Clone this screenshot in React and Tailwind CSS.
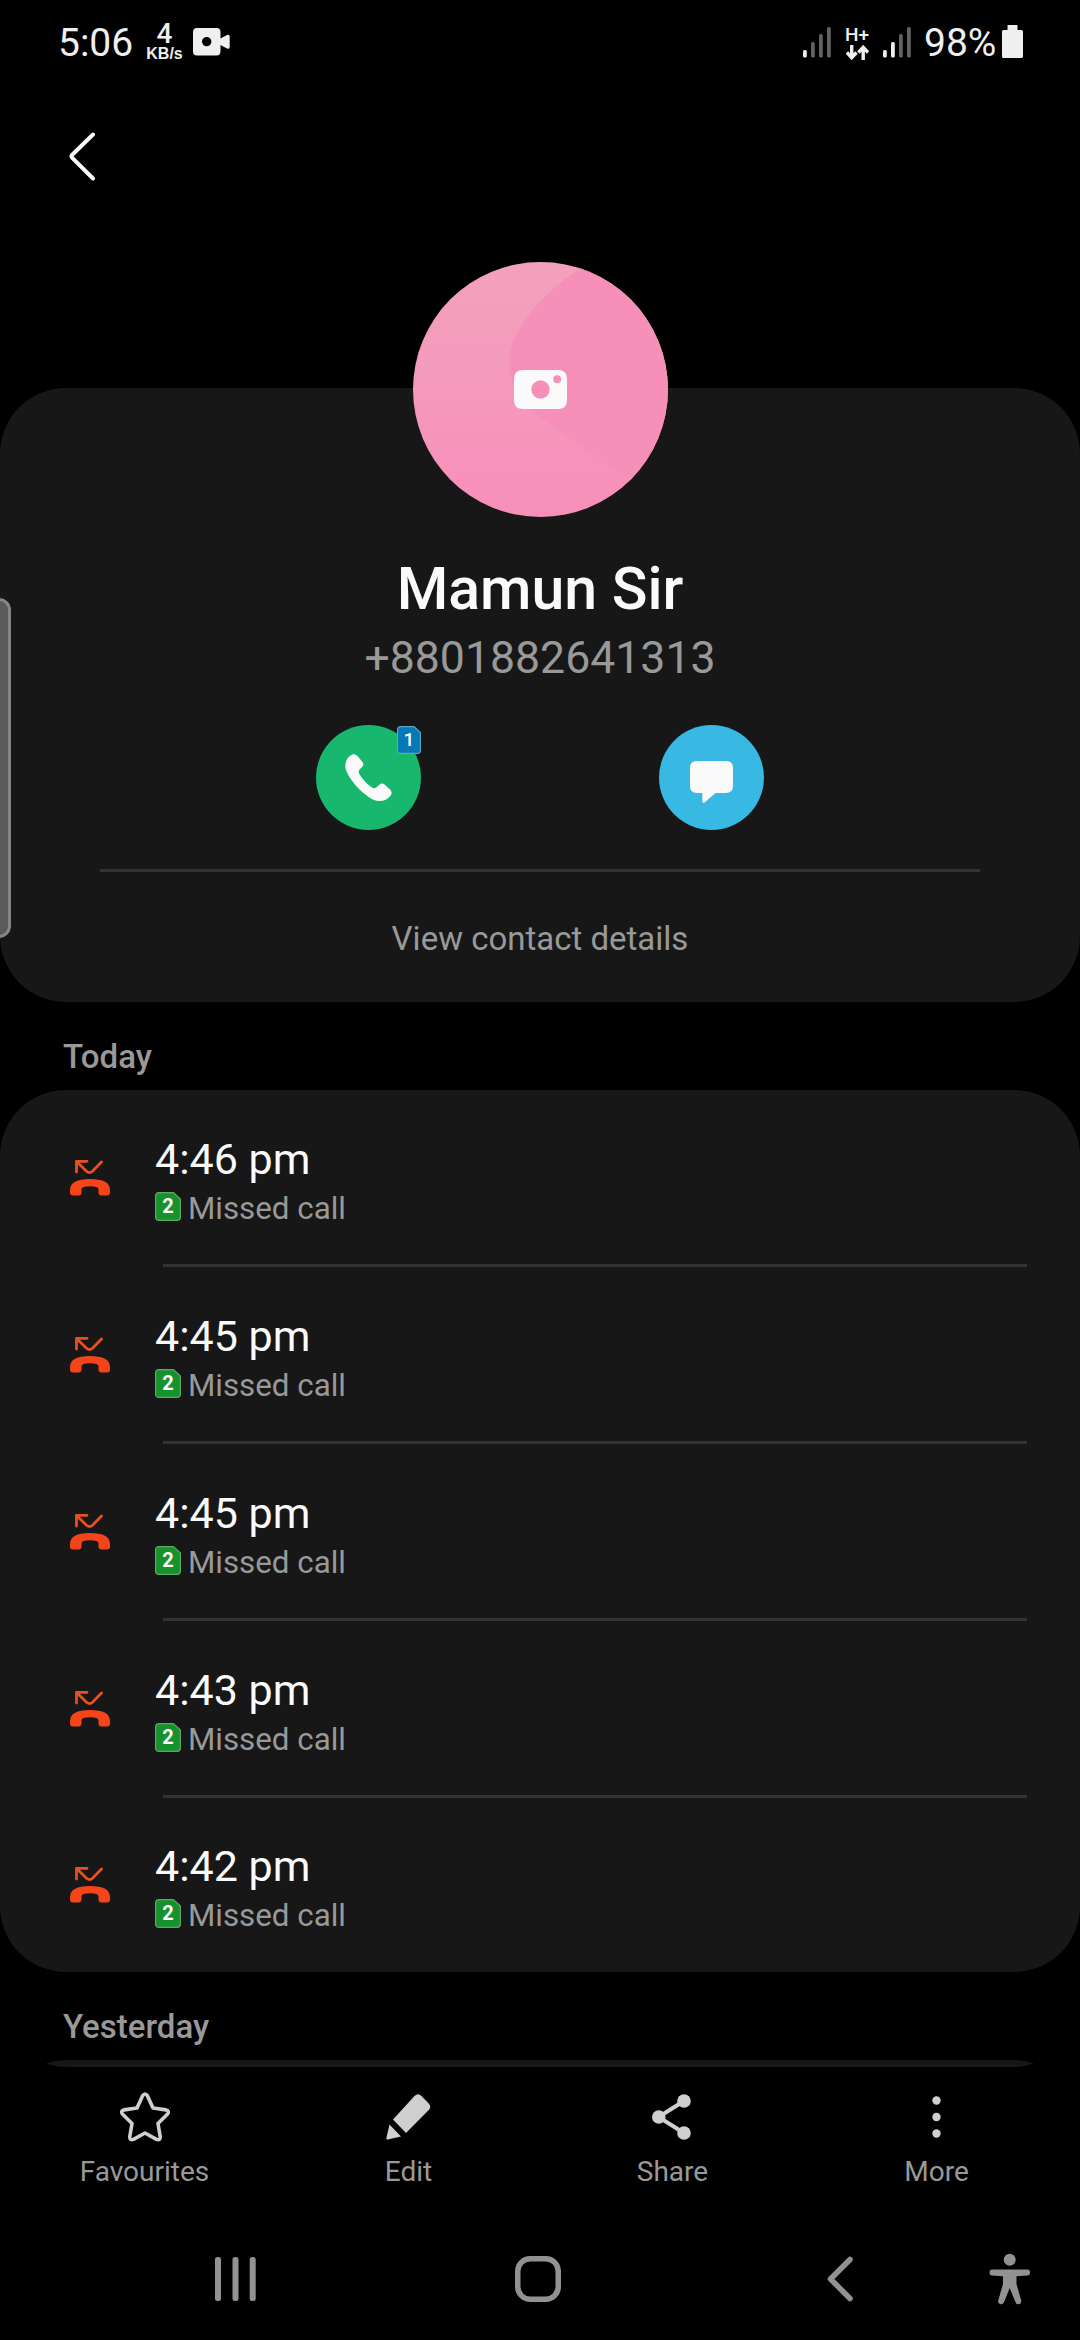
import React from "react";

const calls = ["4:46 pm", "4:45 pm", "4:45 pm", "4:43 pm", "4:42 pm"];

function Signal({ active }) {
  const tops = [23, 15, 7, 0];
  return (
    <svg width="28" height="31" viewBox="0 0 28 31">
      {tops.map((t, i) => (
        <rect key={i} x={i * 8} y={t} width="3.8" height={30.5 - t} rx="1.6" fill={i < active ? "#efefef" : "#616161"} />
      ))}
    </svg>
  );
}

function StatusBar() {
  return (
    <div className="flex h-[84px] shrink-0 items-start justify-between pr-[57px] pl-[58px] text-[#efefef]">
      <div className="flex">
        <span className="mt-[20px] w-[88px] text-[39px] leading-[46px]">5:06</span>
        <div className="mt-[20px] flex w-[37px] flex-col items-center">
          <span className="text-[28px] leading-[28px] font-medium">4</span>
          <span className="-mt-[4px] font-['Liberation_Sans',sans-serif] text-[16px] leading-[20px] font-bold whitespace-nowrap">KB/s</span>
        </div>
        <svg className="mt-[28px] ml-[10px]" width="38" height="28" viewBox="0 0 38 28">
          <path fillRule="evenodd" fill="#efefef" d="M4 0H23.5Q27.5 0 27.5 4V10.5L34 7Q36.7 6 36.7 8.5V19Q36.7 21.5 34 20.5L27.5 17V23Q27.5 27.5 23.5 27.5H4Q0 27.5 0 23.5V4Q0 0 4 0ZM13.7 8.9A4.7 4.7 0 1 0 13.7 18.3A4.7 4.7 0 1 0 13.7 8.9Z" />
        </svg>
      </div>
      <div className="flex">
        <div className="mt-[27px] w-[42px]"><Signal active={1} /></div>
        <div className="mt-[24px] flex w-[24px] flex-col items-center">
          <span className="text-[19px] leading-[21px] font-medium">H+</span>
          <svg width="23" height="15" viewBox="0 0 23 15" fill="none" stroke="#efefef" strokeWidth="3.4">
            <path d="M5.7 0V12.5M0.9 7.5L5.7 12.7L10.5 7.5M17.2 15V2.5M12.4 7.5L17.2 2.3L22 7.5" />
          </svg>
        </div>
        <div className="mt-[27px] ml-[14px] w-[41px]"><Signal active={2} /></div>
        <span className="mt-[20px] w-[78px] text-[39px] leading-[46px]">98%</span>
        <svg className="mt-[25px]" width="21" height="33" viewBox="0 0 21 33">
          <path fill="#efefef" d="M6 0H15Q15.5 0 15.5 0.5V5H19.5Q21 5 21 6.5V31.5Q21 33 19.5 33H1.5Q0 33 0 31.5V6.5Q0 5 1.5 5H5.5V0.5Q5.5 0 6 0Z" />
        </svg>
      </div>
    </div>
  );
}

function SimBadge({ n, fill, stroke, w, h, className }) {
  return (
    <span className={"flex items-center justify-center " + className}>
      <svg className="absolute inset-0" width={w} height={h} viewBox="0 0 26 29" preserveAspectRatio="none">
        <path d="M4 .6H18.5L25.4 7V25Q25.4 28.4 22 28.4H4Q.6 28.4 .6 25V4Q.6 .6 4 .6Z" fill={fill} stroke={stroke} strokeWidth="1.2" />
      </svg>
      <span className="relative">{n}</span>
    </span>
  );
}

function Avatar() {
  return (
    <svg className="-mt-[126px] shrink-0" width="255" height="255" viewBox="0 0 255 255">
      <defs>
        <linearGradient id="pink" x1="0" y1="0" x2="0" y2="1">
          <stop offset="0" stopColor="#f3a1bc" />
          <stop offset="0.5" stopColor="#f599bb" />
          <stop offset="0.8" stopColor="#f792ba" />
          <stop offset="1" stopColor="#f790b8" />
        </linearGradient>
        <clipPath id="round"><circle cx="127.5" cy="127.5" r="127.5" /></clipPath>
      </defs>
      <g clipPath="url(#round)">
        <rect width="255" height="255" fill="url(#pink)" />
        <path d="M168 6C140 24 96 62 96 101C96 148 150 168 212 214L255 255V0H176Z" fill="#f690b8" />
      </g>
      <path fillRule="evenodd" fill="#fafafa" d="M110 108H145Q154 108 154 117V138Q154 147 145 147H110Q101 147 101 138V117Q101 108 110 108ZM127.5 118.3A9.2 9.2 0 1 0 127.5 136.7A9.2 9.2 0 1 0 127.5 118.3ZM144.2 113.3A4 4 0 1 0 144.2 121.3A4 4 0 1 0 144.2 113.3Z" />
    </svg>
  );
}

function ContactCard() {
  return (
    <section className="flex h-[614px] shrink-0 flex-col items-center rounded-[66px] bg-[#171717]">
      <Avatar />
      <h1 className="mt-[37px] text-[59px] leading-[70px] font-medium text-[#fafafa]">Mamun Sir</h1>
      <p className="mt-[7px] text-[44.6px] leading-[54px] text-[#999]">+8801882641313</p>
      <div className="mt-[40px] flex gap-[238px]">
        <button className="relative flex size-[105px] items-center justify-center rounded-full bg-[#17b76d]">
          <svg width="47" height="48" viewBox="0 0 47 48">
            <path fill="#fafafa" d="M5.5 1.5Q9.5 -1 12.5 2L17.5 8Q19.2 10.5 17.5 12.5L14.5 15.5Q13 17.5 14.3 20Q19.5 28.5 27 33.5Q29.5 34.9 31.5 33.3L35 30.3Q37 28.8 39.5 30.5L45 35.5Q48 38.5 45.5 41.8Q41.5 47 34.5 47Q29.5 47.2 23 42.5Q13.5 36 6.5 26Q0 17 .3 11.5Q.5 5 5.5 1.5Z" />
          </svg>
          <SimBadge n="1" fill="#0579b5" stroke="#5fa5c8" w={24} h={28} className="absolute top-px right-0 h-[28px] w-[24px] text-[19px] leading-[28px] font-medium text-white" />
        </button>
        <button className="flex size-[105px] items-center justify-center rounded-full bg-[#37b9e3]">
          <svg className="mt-[9px]" width="43" height="42" viewBox="0 0 43 42">
            <path fill="#fafafa" d="M7 0H36Q43 0 43 7V25Q43 32 36 32H25.5L14.5 41.5Q12.3 42.5 12.3 40.5V32H7Q0 32 0 25V7Q0 0 7 0Z" />
          </svg>
        </button>
      </div>
      <div className="mt-[39px] h-[3px] w-[880px] shrink-0 bg-[#333]" />
      <p className="mt-[47px] text-[33px] leading-[40px] text-[#999]">View contact details</p>
    </section>
  );
}

function MissedIcon() {
  return (
    <svg className="mt-[70px] ml-[70px] shrink-0" width="40" height="37" viewBox="0 0 40 37">
      <path d="M17 1.3H6.5V12M6.5 1.5L16.5 11.2Q19.5 13.8 22.5 11.2L31.5 2" fill="none" stroke="#e8501f" strokeWidth="2.8" strokeLinecap="round" strokeLinejoin="round" />
      <path d="M0 30Q0 19 20 19Q40 19 40 30V32.500Q40 35.500 37 35.500H31.500Q28.500 35.500 28.500 32.500V29.500Q28.500 26.300 20 26.300Q11.500 26.300 11.500 29.500V32.500Q11.500 35.500 8.500 35.500H3Q0 35.500 0 32.500Z" fill="#f5441a" />
    </svg>
  );
}

function CallRow({ time, last }) {
  return (
    <li className={last ? "-mt-px h-[175px]" : "h-[177px]"}>
      <div className="flex h-[174px]">
        <MissedIcon />
        <div className="mt-[44px] ml-[45px] flex flex-col">
          <span className="self-start text-[43px] leading-[50px] text-[#fafafa]">{time}</span>
          <div className="mt-[6px] flex items-start">
            <SimBadge n="2" fill="#16912b" stroke="#5fa868" w={26} h={29} className="relative mt-[2px] h-[29px] w-[26px] text-[20px] leading-[29px] font-bold text-white" />
            <span className="ml-[7px] text-[31.3px] leading-[38px] text-[#999]">Missed call</span>
          </div>
        </div>
      </div>
      {!last && <div className="mr-[53px] ml-[163px] h-[3px] bg-[#333]" />}
    </li>
  );
}

function StarIcon() {
  return (
    <svg width="50" height="50" viewBox="0 0 50 50" fill="none" stroke="#cfcfcf" strokeWidth="3.6" strokeLinejoin="round">
      <path d="M22.6 3.8Q25 0.2 27.4 3.8L33 16L46 17.9Q50 19 47.3 22.3L38 31.5L40.2 44.5Q40.5 48.8 36.5 47.4L25 41L13.5 47.4Q9.5 48.8 9.8 44.5L12 31.5L2.7 22.3Q0 19 4 17.9L17 16Z" />
    </svg>
  );
}

function EditIcon() {
  return (
    <svg width="45" height="46" viewBox="0 0 45 46" fill="#cfcfcf">
      <path d="M28.5 2Q32 -1.3 35.5 2L42.5 9.2Q45.8 12.5 42.8 16L20 39L7 25.5Z" />
      <path d="M3.5 30.5L15 42.5L1.8 45.5Q0.2 45.8 .4 44Z" />
    </svg>
  );
}

function ShareIcon() {
  return (
    <svg className="mr-[3px]" width="39" height="46" viewBox="0 0 39 46" fill="#cfcfcf">
      <path d="M32 7L6.5 23L32 39" fill="none" stroke="#cfcfcf" strokeWidth="4" />
      <circle cx="32" cy="7" r="6.8" />
      <circle cx="6.8" cy="23" r="6.8" />
      <circle cx="32" cy="39" r="6.8" />
    </svg>
  );
}

function MoreIcon() {
  return (
    <svg width="9" height="42" viewBox="0 0 9 42" fill="#cfcfcf">
      <circle cx="4.5" cy="4.5" r="4.2" />
      <circle cx="4.5" cy="21" r="4.2" />
      <circle cx="4.5" cy="37.5" r="4.2" />
    </svg>
  );
}

const actions = [
  ["Favourites", StarIcon],
  ["Edit", EditIcon],
  ["Share", ShareIcon],
  ["More", MoreIcon],
];

function SectionTitle({ children }) {
  return (
    <h2 className="h-[88px] shrink-0 pt-[35px] pl-[63px] text-[33px] leading-[40px] font-medium text-[#999]">{children}</h2>
  );
}

export default function App() {
  return (
    <main className="relative flex h-[2340px] w-[1080px] flex-col overflow-hidden bg-black font-['Roboto',sans-serif]">
      <StatusBar />
      <header className="h-[304px] shrink-0 pt-[47px] pl-[68px]">
        <svg width="29" height="50" viewBox="0 0 29 50" fill="none" stroke="#fafafa" strokeWidth="4" strokeLinecap="round" strokeLinejoin="round">
          <path d="M25 3.5L4 24Q3 25.3 4 26.6L25 47.5" />
        </svg>
      </header>
      <ContactCard />
      <SectionTitle>Today</SectionTitle>
      <ul className="h-[882px] shrink-0 rounded-[66px] bg-[#171717]">
        {calls.map((t, i) => (
          <CallRow key={i} time={t} last={i === calls.length - 1} />
        ))}
      </ul>
      <SectionTitle>Yesterday</SectionTitle>
      <svg className="mx-[46px] shrink-0" width="988" height="7" viewBox="0 0 988 7">
        <path d="M0 3.5Q10 0 22 0H966Q978 0 988 3.5Q978 7 966 7H22Q10 7 0 3.5Z" fill="#171717" />
      </svg>
      <nav className="mt-[24px] mr-[11.5px] ml-[12.5px] grid h-[97px] shrink-0 grid-cols-4 text-[28px] leading-[34px] text-[#999]">
        {actions.map(([label, Icon]) => (
          <button key={label} className="flex flex-col items-center">
            <span className="flex h-[51px] items-center"><Icon /></span>
            <span className="mt-[13px]">{label}</span>
          </button>
        ))}
      </nav>
      <div className="flex h-[152px] shrink-0 items-center pt-[29px] text-[#929292]">
        <svg className="ml-[215px]" width="42" height="44" viewBox="0 0 42 44" fill="currentColor">
          <rect x="0" y="0" width="6" height="44" rx="2.5" />
          <rect x="17.5" y="0" width="6" height="44" rx="2.5" />
          <rect x="34.7" y="0" width="6" height="44" rx="2.5" />
        </svg>
        <svg className="ml-[258px]" width="46" height="46" viewBox="0 0 46 46" fill="none" stroke="currentColor" strokeWidth="5.5">
          <rect x="2.75" y="2.75" width="40.5" height="40.5" rx="12.5" />
        </svg>
        <svg className="ml-[265px]" width="28" height="46" viewBox="0 0 28 46" fill="none" stroke="currentColor" strokeWidth="5.5" strokeLinecap="round" strokeLinejoin="round">
          <path d="M24 3.5L4.5 23L24 42.5" />
        </svg>
        <svg className="ml-[135px]" width="42" height="52" viewBox="0 0 42 52" fill="currentColor">
          <circle cx="20.7" cy="6.7" r="6" />
          <path d="M3 16.5H38.5Q41 16.7 41 19.5Q41 22.3 38.5 22.5L27.5 23.2V31L32.3 48Q32.6 50.5 30 51.2Q27.3 51.5 26.5 49.2L20.7 35L15 49.2Q14 51.5 11.5 51.2Q8.8 50.5 9.1 48L14 31V23.2L3 22.5Q.5 22.3 .5 19.5Q.5 16.7 3 16.5Z" />
        </svg>
      </div>
      <div className="absolute top-[598px] -left-[20px] h-[340px] w-[31px] rounded-[12px] border-[3px] border-[#868686] bg-[#5a5a5a]" />
    </main>
  );
}
